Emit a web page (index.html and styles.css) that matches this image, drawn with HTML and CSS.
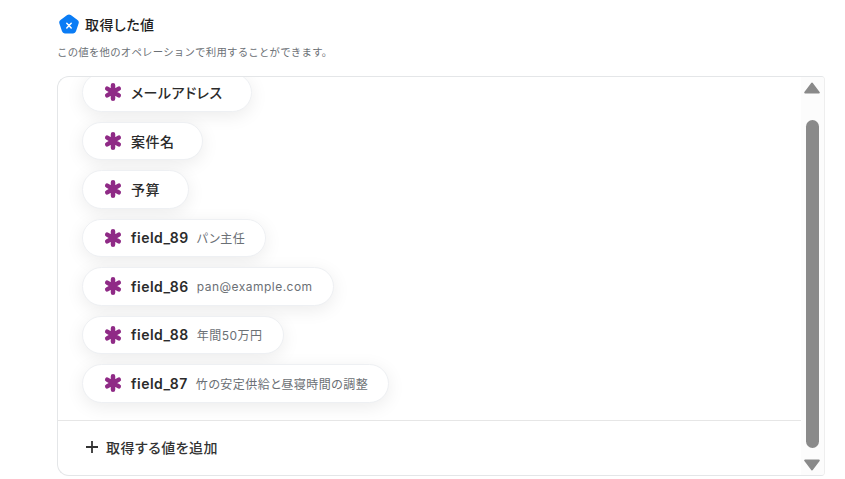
FILE: index.html
```html
<!DOCTYPE html>
<html lang="ja">
<head>
<meta charset="utf-8">
<title>取得した値</title>
<link rel="stylesheet" href="styles.css">
</head>
<body>
<main class="page">
  <header class="head">
    <svg class="logo" viewBox="0 0 22 22" width="22" height="22" aria-hidden="true">
      <path d="M9.2 1.1a3 3 0 0 1 3.6 0l6.7 4.9a3 3 0 0 1 1.1 3.4l-2.6 7.9a3 3 0 0 1-2.9 2.1H6.9A3 3 0 0 1 4 17.3L1.400 9.400A3 3 0 0 1 2.500 6z" fill="#0a7cf5"/>
      <path d="M8.800 9.200l4.400 4.800M13.200 9.200l-4.400 4.800" stroke="#fff" stroke-width="1.500" stroke-linecap="round" fill="none"/>
    </svg>
    <h1 class="title">取得した値</h1>
  </header>
  <p class="desc">この値を他のオペレーションで利用することができます。</p>
  <section class="panel">
    <div class="body">
      <div class="main">
        <ul class="list">
          <li class="chip"><svg class="star" viewBox="0 0 18 18"><use href="#ast"/></svg><span class="name">メールアドレス</span></li>
          <li class="chip"><svg class="star" viewBox="0 0 18 18"><use href="#ast"/></svg><span class="name">案件名</span></li>
          <li class="chip"><svg class="star" viewBox="0 0 18 18"><use href="#ast"/></svg><span class="name">予算</span></li>
          <li class="chip"><svg class="star" viewBox="0 0 18 18"><use href="#ast"/></svg><span class="name latin">field_89</span><span class="val">パン主任</span></li>
          <li class="chip"><svg class="star" viewBox="0 0 18 18"><use href="#ast"/></svg><span class="name latin">field_86</span><span class="val">pan@example.com</span></li>
          <li class="chip"><svg class="star" viewBox="0 0 18 18"><use href="#ast"/></svg><span class="name latin">field_88</span><span class="val">年間50万円</span></li>
          <li class="chip"><svg class="star" viewBox="0 0 18 18"><use href="#ast"/></svg><span class="name latin">field_87</span><span class="val">竹の安定供給と昼寝時間の調整</span></li>
        </ul>
        <div class="foot">
          <svg class="plus" viewBox="0 0 12 12" width="12" height="12" aria-hidden="true"><path d="M6 0v12M0 6h12" stroke="#333" stroke-width="1.800"/></svg>
          <span class="add">取得する値を追加</span>
        </div>
      </div>
      <div class="bar">
        <svg class="arrow" viewBox="0 0 16 12" width="16" height="12" aria-hidden="true"><path d="M8 1.500L14.800 10.500H1.200z" fill="#8a8a8a" stroke="#8a8a8a" stroke-width="2" stroke-linejoin="round"/></svg>
        <div class="thumb"></div>
        <svg class="arrow" viewBox="0 0 16 12" width="16" height="12" aria-hidden="true"><path d="M1.200 1.500H14.800L8 10.500z" fill="#8a8a8a" stroke="#8a8a8a" stroke-width="2" stroke-linejoin="round"/></svg>
      </div>
    </div>
  </section>
</main>
<svg class="defs" aria-hidden="true"><defs><g id="ast" stroke="#8f2a86" stroke-width="4.500" stroke-linecap="round"><path d="M9 2.300V15.700M3.200 5.650L14.800 12.350M14.800 5.650L3.200 12.350"/></g></defs></svg>
</body>
</html>
```
FILE: styles.css
```css
* { box-sizing: border-box; }
html, body { margin: 0; padding: 0; background: #fff; overflow: hidden; }
body {
  width: 845px;
  height: 479px;
  font-family: Inter, "Noto Sans CJK JP", sans-serif;
  font-feature-settings: "palt";
  letter-spacing: 0.03em;
  color: #2b2b2b;
}
.page { padding: 14px 20px 0 57px; }
.head { display: flex; align-items: center; gap: 5px; height: 22px; padding-left: 1px; }
.logo { flex: none; }
.title { margin: 0; font-size: 14px; font-weight: 500; line-height: 22px; color: #1f1f1f; }
.desc {
  margin: 9px 0 15px;
  font-size: 10.400px;
  font-feature-settings: normal;
  letter-spacing: 0.024em;
  line-height: 15px;
  color: #6b7075;
  height: 16px;
}
.panel {
  height: 400px;
  border: 1px solid #e4e6e8;
  border-right-color: #eee;
  border-radius: 12px 4px 4px 12px;
  overflow: hidden;
}
.body { display: flex; height: 100%; }
.main { flex: 1; min-width: 0; display: flex; flex-direction: column; }
.list {
  flex: none;
  height: 343px;
  margin: 0;
  padding: 0 0 0 24px;
  list-style: none;
  overflow: hidden;
  display: flex;
  flex-direction: column;
  align-items: flex-start;
  gap: 10px;
}
.chip {
  flex: none;
  display: flex;
  align-items: center;
  height: 38.500px;
  padding: 0 20px 0 21px;
  border: 1px solid #eef0f3;
  border-radius: 20px;
  background: #fff;
  box-shadow: 0 4px 18px rgba(0, 0, 0, 0.08);
}
.chip:first-child { margin-top: -4px; }
.star { width: 18px; height: 18px; flex: none; margin-right: 9px; }
.name { font-size: 14px; font-weight: 500; color: #2b2b2b; margin-right: 8px; }
.latin { font-weight: 600; }
.val { font-size: 12px; color: #6b7075; }
.foot {
  flex: 1;
  display: flex;
  align-items: center;
  gap: 8px;
  padding: 0 0 3px 28px;
  border-top: 1px solid #e6e6e6;
}
.plus { flex: none; }
.add { font-size: 14px; font-weight: 500; color: #333; }
.bar {
  flex: none;
  width: 23px;
  display: flex;
  flex-direction: column;
  align-items: center;
  background: #fcfcfc;
  padding: 5px 1px 4px 0;
}
.arrow { flex: none; }
.thumb { flex: 1; width: 13px; margin: 26px 0 11px; border-radius: 7px; background: #8a8a8a; }
.defs { position: absolute; width: 0; height: 0; }
```
